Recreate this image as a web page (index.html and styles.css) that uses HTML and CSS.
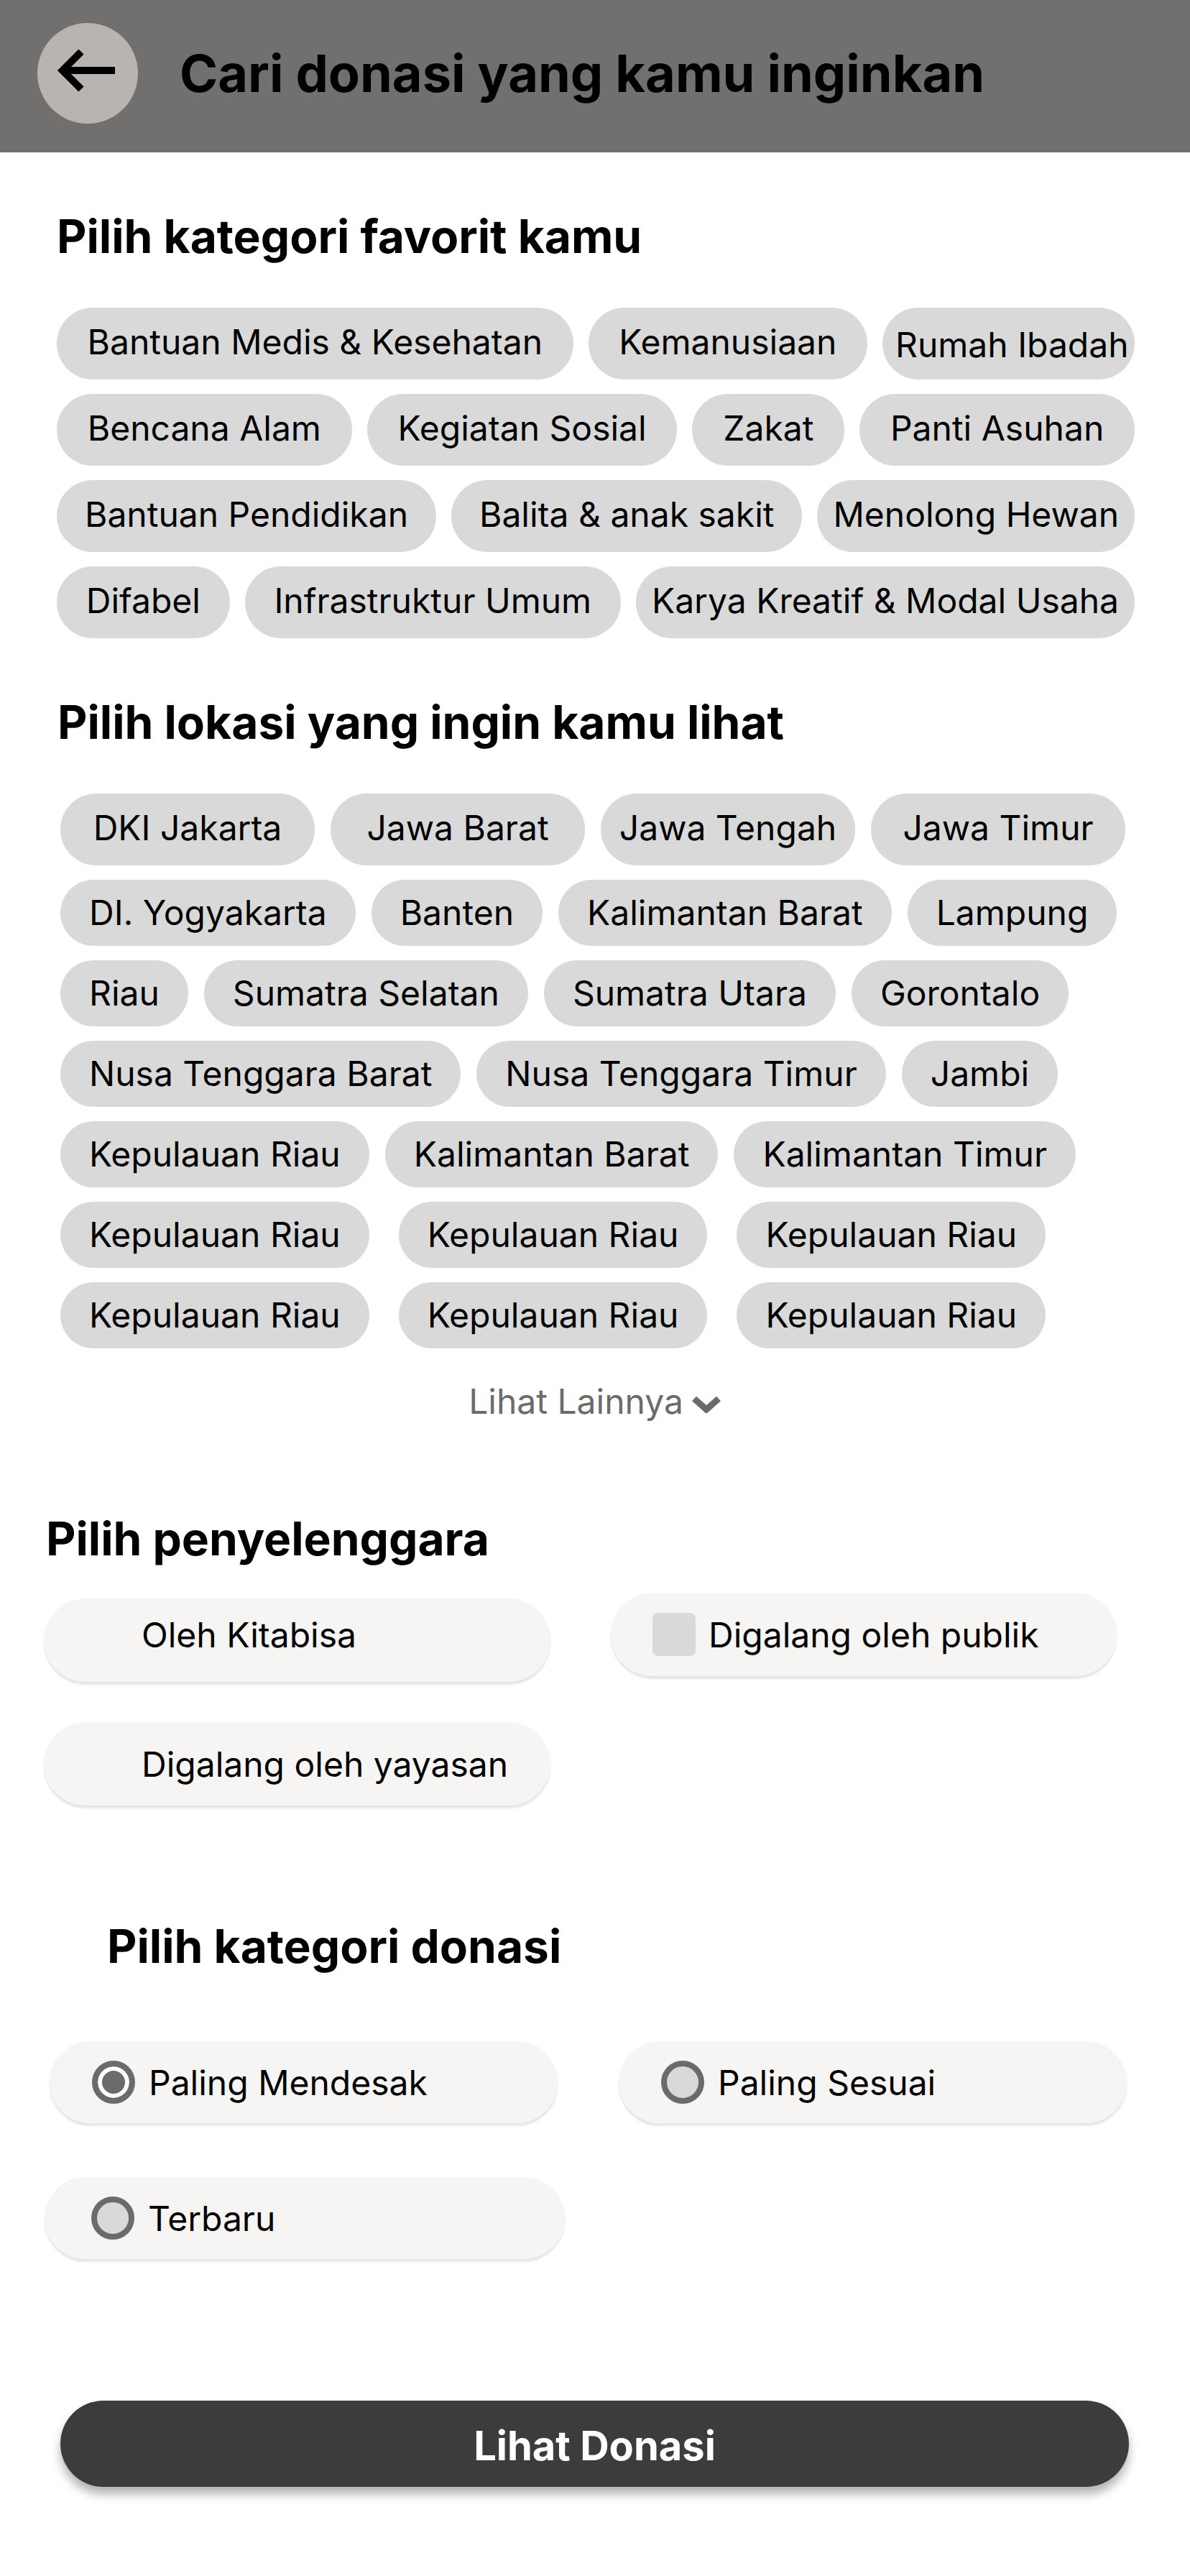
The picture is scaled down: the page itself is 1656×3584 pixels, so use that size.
FILE: index.html
```html
<!DOCTYPE html>
<html lang="id">
<head>
<meta charset="utf-8">
<title>Cari donasi</title>
<link rel="stylesheet" href="styles.css">
</head>
<body>
<header class="topbar">
  <button class="back-btn" aria-label="Kembali">
    <svg viewBox="0 0 140 140" width="140" height="140">
      <path d="M61 40 L35 66 L61 92 M35 66 H108" fill="none" stroke="#000" stroke-width="10" stroke-linejoin="miter"/>
    </svg>
  </button>
  <h1 class="topbar-title">Cari donasi yang kamu inginkan</h1>
</header>

<main>
  <section class="categories">
    <h2 class="section-title">Pilih kategori favorit kamu</h2>
    <div class="chip-list">
      <div class="chip-row fill">
        <span class="chip">Bantuan Medis &amp; Kesehatan</span>
        <span class="chip">Kemanusiaan</span>
        <span class="chip tight">Rumah Ibadah</span>
      </div>
      <div class="chip-row fill">
        <span class="chip">Bencana Alam</span>
        <span class="chip">Kegiatan Sosial</span>
        <span class="chip">Zakat</span>
        <span class="chip">Panti Asuhan</span>
      </div>
      <div class="chip-row fill">
        <span class="chip">Bantuan Pendidikan</span>
        <span class="chip">Balita &amp; anak sakit</span>
        <span class="chip snug">Menolong Hewan</span>
      </div>
      <div class="chip-row fill">
        <span class="chip">Difabel</span>
        <span class="chip">Infrastruktur Umum</span>
        <span class="chip snug">Karya Kreatif &amp; Modal Usaha</span>
      </div>
    </div>
  </section>

  <section class="locations">
    <h2 class="section-title">Pilih lokasi yang ingin kamu lihat</h2>
    <div class="chip-list loc-list">
      <div class="chip-row loc-row">
        <span class="chip loc fixed">DKI Jakarta</span>
        <span class="chip loc fixed">Jawa Barat</span>
        <span class="chip loc fixed">Jawa Tengah</span>
        <span class="chip loc fixed">Jawa Timur</span>
      </div>
      <div class="chip-row loc-row">
        <span class="chip loc">DI. Yogyakarta</span>
        <span class="chip loc">Banten</span>
        <span class="chip loc">Kalimantan Barat</span>
        <span class="chip loc">Lampung</span>
      </div>
      <div class="chip-row loc-row">
        <span class="chip loc">Riau</span>
        <span class="chip loc">Sumatra Selatan</span>
        <span class="chip loc">Sumatra Utara</span>
        <span class="chip loc">Gorontalo</span>
      </div>
      <div class="chip-row loc-row">
        <span class="chip loc">Nusa Tenggara Barat</span>
        <span class="chip loc">Nusa Tenggara Timur</span>
        <span class="chip loc">Jambi</span>
      </div>
      <div class="chip-row loc-row">
        <span class="chip loc">Kepulauan Riau</span>
        <span class="chip loc">Kalimantan Barat</span>
        <span class="chip loc">Kalimantan Timur</span>
      </div>
      <div class="chip-row loc-row wide">
        <span class="chip loc">Kepulauan Riau</span>
        <span class="chip loc">Kepulauan Riau</span>
        <span class="chip loc">Kepulauan Riau</span>
      </div>
      <div class="chip-row loc-row wide">
        <span class="chip loc">Kepulauan Riau</span>
        <span class="chip loc">Kepulauan Riau</span>
        <span class="chip loc">Kepulauan Riau</span>
      </div>
    </div>
    <a class="more-link" href="#">Lihat Lainnya<svg class="chevron" viewBox="0 0 42 24" width="42" height="24"><path d="M4 4 L21 19 L38 4" fill="none" stroke="#6b6b6b" stroke-width="9"/></svg></a>
  </section>

  <section class="organizers">
    <h2 class="section-title">Pilih penyelenggara</h2>
    <div class="option-grid org-grid">
      <label class="option-card offset"><span class="checkbox blank"></span><span>Oleh Kitabisa</span></label>
      <label class="option-card raised"><span class="checkbox"></span><span>Digalang oleh publik</span></label>
      <label class="option-card"><span class="checkbox blank"></span><span>Digalang oleh yayasan</span></label>
    </div>
  </section>

  <section class="sorting">
    <h2 class="section-title sorting-title">Pilih kategori donasi</h2>
    <div class="option-grid sort-grid">
      <label class="option-card radio-card"><span class="radio selected"></span><span>Paling Mendesak</span></label>
      <label class="option-card radio-card"><span class="radio"></span><span>Paling Sesuai</span></label>
      <label class="option-card radio-card wide"><span class="radio"></span><span>Terbaru</span></label>
    </div>
  </section>

  <div class="cta-wrap">
    <button class="cta">Lihat Donasi</button>
  </div>
</main>
</body>
</html>
```

FILE: styles.css
```css
* {
  box-sizing: border-box;
  margin: 0;
  padding: 0;
}

body {
  width: 1656px;
  min-height: 3584px;
  background: #ffffff;
  color: #000000;
  font-family: Inter, "Noto Sans", "Liberation Sans", sans-serif;
}

/* Header */
.topbar {
  height: 212px;
  background: #71706e;
  display: flex;
  align-items: flex-start;
  padding: 32px 0 0 52px;
}

.back-btn {
  width: 140px;
  height: 140px;
  border: 0;
  border-radius: 50%;
  background: #b7b4b2;
  display: flex;
  flex-shrink: 0;
}

.back-btn svg {
  display: block;
}

.topbar-title {
  margin-left: 58px;
  font-size: 72px;
  font-weight: 700;
  line-height: 140px;
  white-space: nowrap;
}

/* Section titles */
.section-title {
  font-size: 64px;
  font-weight: 700;
  line-height: 80px;
  white-space: nowrap;
}

/* Chips */
.categories {
  padding: 77px 77px 0 79px;
}

.chip-list {
  margin-top: 59px;
  display: flex;
  flex-direction: column;
  gap: 20px;
}

.chip-row {
  display: flex;
  gap: 21px;
}

.chip {
  height: 100px;
  line-height: 96px;
  padding: 0 12px;
  background: #d9d9d9;
  border-radius: 50px;
  font-size: 48px;
  white-space: nowrap;
  text-align: center;
}

.chip-row.fill .chip {
  flex: 1 1 auto;
}

.chip-row.fill .chip.tight {
  flex: 0 0 351px;
  padding: 4px 0 0 18px;
  text-align: left;
  overflow: visible;
}

.chip-row.fill .chip.snug {
  flex-grow: 0;
  padding: 0 22px;
}

.locations {
  padding: 77px 80px 0 80px;
}

.loc-list {
  padding-left: 4px;
}

.loc-row {
  gap: 22px;
}

.loc-row.wide {
  gap: 41px;
}

.chip.loc {
  height: 92px;
  line-height: 92px;
  padding: 0 40px;
  border-radius: 46px;
}

.chip.loc.fixed {
  width: 354px;
  height: 100px;
  line-height: 96px;
  padding: 0;
  border-radius: 50px;
}

.more-link {
  margin-top: 44px;
  display: flex;
  justify-content: center;
  align-items: center;
  gap: 11px;
  font-size: 48px;
  line-height: 60px;
  color: #6b6b6b;
  text-decoration: none;
}

.chevron {
  display: block;
  margin-top: 8px;
}

/* Option cards */
.organizers {
  padding: 121px 0 0 61px;
}

.organizers .section-title {
  margin-left: 3px;
}

.option-grid {
  display: grid;
  align-items: start;
}

.org-grid {
  margin-top: 43px;
  grid-template-columns: 705px 704px;
  column-gap: 84px;
  row-gap: 56px;
}

.option-card {
  height: 116px;
  border-radius: 58px;
  background: #f6f5f3;
  box-shadow: 0 4px 3px rgba(0, 0, 0, 0.1);
  display: flex;
  align-items: center;
  gap: 18px;
  padding-left: 58px;
  font-size: 48px;
  white-space: nowrap;
}

.option-card.raised {
  margin-top: -8px;
}

.option-card.offset {
  padding-bottom: 16px;
}

.checkbox {
  width: 60px;
  height: 60px;
  border-radius: 8px;
  background: #d9d9d9;
  flex-shrink: 0;
}

.checkbox.blank {
  background: transparent;
}

.sorting {
  padding: 156px 0 0 69px;
}

.sorting-title {
  margin-left: 80px;
}

.sort-grid {
  margin-top: 92px;
  grid-template-columns: 707px 707px;
  column-gap: 85px;
  row-gap: 75px;
}

.radio-card {
  height: 114px;
  border-radius: 57px;
  padding-left: 59px;
  gap: 19px;
}

.radio-card.wide {
  width: 724px;
  margin-left: -7px;
  padding-left: 65px;
}

.radio {
  width: 60px;
  height: 60px;
  border-radius: 50%;
  border: 8px solid #6b6b6b;
  background: #d9d9d9;
  flex-shrink: 0;
}

.radio.selected {
  background: #6b6b6b;
  box-shadow: inset 0 0 0 6px #ffffff;
}

/* CTA */
.cta-wrap {
  padding: 197px 0 0 84px;
}

.cta {
  width: 1487px;
  height: 120px;
  border: 0;
  border-radius: 60px;
  background: #3c3c3c;
  color: #ffffff;
  font-family: Inter, "Noto Sans", "Liberation Sans", sans-serif;
  font-size: 56px;
  font-weight: 700;
  line-height: 114px;
  padding-top: 6px;
  box-shadow: 0 10px 14px rgba(0, 0, 0, 0.3);
}
```
